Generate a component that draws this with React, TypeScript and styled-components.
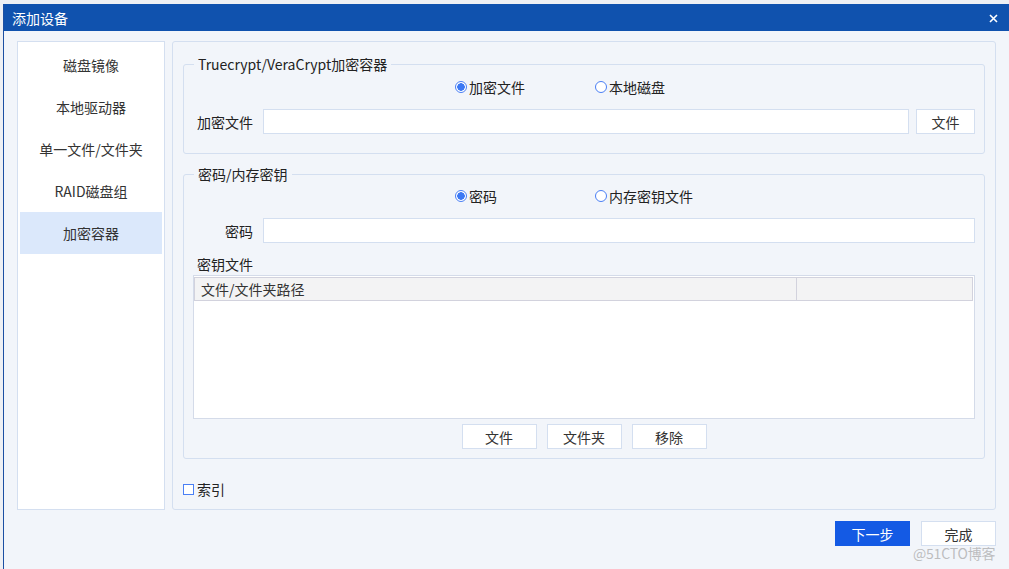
import React from 'react';
import styled, { createGlobalStyle } from 'styled-components';

const GlobalStyle = createGlobalStyle`
  html, body {
    margin: 0;
    padding: 0;
    background: #eef0f4;
    overflow: hidden;
  }
  body {
    font-family: "Noto Sans CJK SC", "Noto Sans", sans-serif;
    font-size: 14px;
    color: #333;
  }
  * { box-sizing: border-box; }
`;

const Screen = styled.div`
  width: 1009px;
  height: 569px;
  padding: 4px 0 0 3px;
  position: relative;
`;

const Dialog = styled.div`
  width: 1006px;
  height: 565px;
  background: #f2f5fa;
  border-left: 1px solid #1c4fa3;
  display: flex;
  flex-direction: column;
`;

const TitleBar = styled.div`
  height: 27px;
  flex: none;
  background: #1052ae;
  color: #fff;
  display: flex;
  align-items: center;
  justify-content: space-between;
  padding: 0 11px 0 8px;
  font-size: 14px;
`;

const CloseIcon = styled.svg`
  width: 9px;
  height: 9px;
  margin-top: 1px;
`;

const Content = styled.div`
  display: flex;
  gap: 7px;
  padding: 10px 0 0 13px;
  height: 479px;
`;

const Nav = styled.div`
  width: 148px;
  background: #fff;
  border: 1px solid #d4dff0;
  padding: 2px 2px;
  display: flex;
  flex-direction: column;
`;

const NavItem = styled.div<{ $active?: boolean }>`
  height: 42px;
  display: flex;
  align-items: center;
  justify-content: center;
  color: #333;
  font-size: 14px;
  padding-bottom: 1px;
  background: ${p => (p.$active ? '#dbe8fb' : 'transparent')};
`;

const Main = styled.div`
  width: 824px;
  border: 1px solid #d4dff0;
  border-radius: 3px;
  background: #f2f5fa;
  padding: 13px 10px 0 10px;
  display: flex;
  flex-direction: column;
`;

const Group = styled.fieldset<{ $gap?: number }>`
  margin: ${p => p.$gap ?? 0}px 0 0 0;
  padding: 0 9px 0 0;
  border: 1px solid #d4dff0;
  border-radius: 3px;
  min-inline-size: 0;
  display: flex;
  flex-direction: column;
`;

const Legend = styled.legend`
  margin-left: 10px;
  padding: 0 4px;
  font-size: 14px;
  line-height: 18px;
  color: #222;
`;

const RadioRow = styled.div<{ $top?: number }>`
  display: flex;
  padding-left: 271px;
  margin-top: ${p => p.$top ?? 5}px;
  height: 18px;
  align-items: center;
`;

const RadioOption = styled.label`
  width: 140px;
  display: flex;
  align-items: center;
  gap: 2px;
  color: #222;
  font-size: 14px;
  line-height: 18px;
`;

const RadioCircle = styled.span<{ $checked?: boolean }>`
  width: 12px;
  height: 12px;
  border-radius: 50%;
  border: 1px solid #4a7ff5;
  background: ${p => (p.$checked ? 'radial-gradient(circle, #3b78f4 0 3.5px, #fff 4px)' : '#fff')};
  flex: none;
`;

const FieldRow = styled.div<{ $top?: number }>`
  display: flex;
  align-items: center;
  gap: 7px;
  margin-top: ${p => p.$top ?? 13}px;
  padding-left: 13px;
`;

const FieldLabel = styled.span`
  width: 56px;
  margin-right: 3px;
  text-align: right;
  color: #222;
  font-size: 14px;
  white-space: nowrap;
`;

const TextBox = styled.div`
  flex: 1;
  height: 25px;
  background: #fff;
  border: 1px solid #d4dff0;
`;

const Button = styled.button<{ $width?: number; $primary?: boolean }>`
  width: ${p => p.$width ?? 75}px;
  height: 25px;
  background: ${p => (p.$primary ? '#145ae4' : '#fff')};
  border: 1px solid ${p => (p.$primary ? '#145ae4' : '#d4dff0')};
  color: ${p => (p.$primary ? '#fff' : '#333')};
  font-family: inherit;
  font-size: 14px;
  padding: 0;
  flex: none;
`;

const GroupEnd = styled.div<{ $h: number }>`
  height: ${p => p.$h}px;
`;

const SubLabel = styled.div`
  margin: 12px 0 0 13px;
  line-height: 18px;
  color: #222;
`;

const Table = styled.div`
  margin: 2px 0 0 9px;
  height: 144px;
  background: #fff;
  border: 1px solid #d4dbe9;
  padding: 1px 1px 0 0;
`;

const TableHead = styled.div`
  display: grid;
  grid-template-columns: 601px 1fr;
  height: 24px;
  background: #f3f3f4;
  border: 1px solid #d2d2dd;
`;

const HeadCell = styled.div`
  display: flex;
  align-items: center;
  padding-left: 6px;
  color: #333;
  font-size: 14px;
  & + & { border-left: 1px solid #d2d2dd; }
`;

const ButtonRow = styled.div`
  display: flex;
  justify-content: center;
  gap: 10px;
  margin: 5px 0 9px 9px;
`;

const CheckRow = styled.label`
  display: flex;
  align-items: center;
  gap: 3px;
  margin-top: 21px;
  color: #222;
  line-height: 18px;
`;

const CheckBox = styled.span`
  width: 11px;
  height: 11px;
  border: 1px solid #4a7ff5;
  background: #fff;
`;

const Footer = styled.div`
  display: flex;
  justify-content: flex-end;
  gap: 11px;
  padding: 11px 13px 0 0;
`;

const Watermark = styled.div`
  position: absolute;
  left: 913px;
  top: 543px;
  font-size: 14px;
  color: rgba(170, 170, 170, 0.75);
  letter-spacing: -0.2px;
`;

const navItems = ['磁盘镜像', '本地驱动器', '单一文件/文件夹', 'RAID磁盘组', '加密容器'];

export default function App() {
  return (
    <>
      <GlobalStyle />
      <Screen>
        <Dialog>
          <TitleBar>
            <span>添加设备</span>
            <CloseIcon viewBox="0 0 9 9">
              <path d="M1 1L8 8M8 1L1 8" stroke="#fff" strokeWidth="1.6" />
            </CloseIcon>
          </TitleBar>
          <Content>
            <Nav>
              {navItems.map(item => (
                <NavItem key={item} $active={item === '加密容器'}>{item}</NavItem>
              ))}
            </Nav>
            <Main>
              <Group>
                <Legend>Truecrypt/VeraCrypt加密容器</Legend>
                <RadioRow>
                  <RadioOption><RadioCircle $checked />加密文件</RadioOption>
                  <RadioOption><RadioCircle />本地磁盘</RadioOption>
                </RadioRow>
                <FieldRow>
                  <FieldLabel>加密文件</FieldLabel>
                  <TextBox />
                  <Button $width={59}>文件</Button>
                </FieldRow>
                <GroupEnd $h={19} />
              </Group>
              <Group $gap={11}>
                <Legend>密码/内存密钥</Legend>
                <RadioRow $top={4}>
                  <RadioOption><RadioCircle $checked />密码</RadioOption>
                  <RadioOption><RadioCircle />内存密钥文件</RadioOption>
                </RadioRow>
                <FieldRow>
                  <FieldLabel>密码</FieldLabel>
                  <TextBox />
                </FieldRow>
                <SubLabel>密钥文件</SubLabel>
                <Table>
                  <TableHead>
                    <HeadCell>文件/文件夹路径</HeadCell>
                    <HeadCell />
                  </TableHead>
                </Table>
                <ButtonRow>
                  <Button>文件</Button>
                  <Button>文件夹</Button>
                  <Button>移除</Button>
                </ButtonRow>
              </Group>
              <CheckRow>
                <CheckBox />
                索引
              </CheckRow>
            </Main>
          </Content>
          <Footer>
            <Button $primary>下一步</Button>
            <Button>完成</Button>
          </Footer>
        </Dialog>
        <Watermark>@51CTO博客</Watermark>
      </Screen>
    </>
  );
}
